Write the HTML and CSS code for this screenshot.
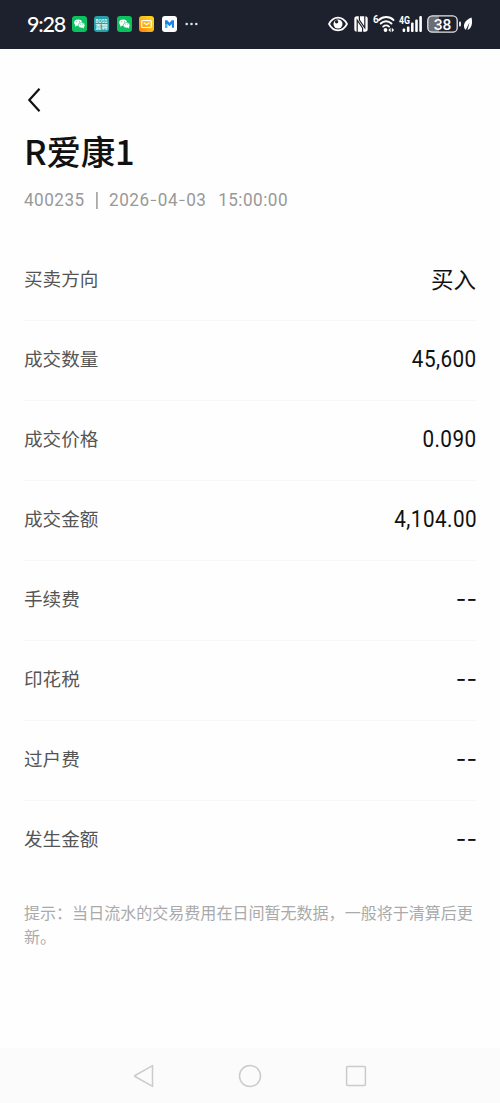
FILE: index.html
```
<!DOCTYPE html>
<html lang="zh-CN">
<head>
    <meta charset="UTF-8">
    <meta name="viewport" content="width=device-width, initial-scale=1.0">
    <title>成交详情</title>
    <link rel="stylesheet" href="styles.css">
</head>
<body>
<svg width="0" height="0" class="defs">
    <symbol id="wechat" viewBox="0 0 15 16">
        <rect width="15" height="16" rx="3" fill="#0bc160"/>
        <ellipse cx="6.1" cy="6.6" rx="3.9" ry="3.2" fill="#fff"/>
        <path d="M3.4 8.5l-.3 2.2 2.2-1.2z" fill="#fff"/>
        <ellipse cx="9.6" cy="9.3" rx="3.3" ry="2.7" fill="#fff" stroke="#0bc160" stroke-width=".6"/>
        <path d="M10.2 11.4l1.8 1 -.2-1.9z" fill="#fff"/>
        <g fill="#0bc160">
            <circle cx="4.8" cy="5.7" r=".5"/>
            <circle cx="7.4" cy="5.7" r=".5"/>
            <circle cx="8.6" cy="8.7" r=".4"/>
            <circle cx="10.7" cy="8.7" r=".4"/>
        </g>
    </symbol>
</svg>

<div class="status-bar">
    <div class="status-left">
        <span class="time">9:28</span>
        <div class="apps">
            <svg class="app"><use href="#wechat"/></svg>
            <svg class="app" viewBox="0 0 15 16">
                <rect width="15" height="16" rx="3" fill="#2a9fa5"/>
                <text x="7.5" y="6.6" class="boss-en" textLength="12" lengthAdjust="spacingAndGlyphs">BOSS</text>
                <text x="7.5" y="13.4" class="boss-cn">直聘</text>
            </svg>
            <svg class="app"><use href="#wechat"/></svg>
            <svg class="app" viewBox="0 0 15 16">
                <defs>
                    <linearGradient id="mail" x1="0" y1="1" x2="1" y2="0">
                        <stop offset="0" stop-color="#ff7d12"/>
                        <stop offset=".5" stop-color="#fdb81c"/>
                        <stop offset="1" stop-color="#fbdc1c"/>
                    </linearGradient>
                </defs>
                <rect width="15" height="16" rx="3" fill="url(#mail)"/>
                <rect x="2.7" y="4.5" width="9.6" height="7" rx="1" fill="none" stroke="#fff" stroke-width="1.2"/>
                <path d="M4.7 6.7l2.8 1.9 2.8-1.9" fill="none" stroke="#fff" stroke-width="1.1"/>
            </svg>
            <svg class="app" viewBox="0 0 15 16">
                <rect width="15" height="16" rx="3" fill="#fff"/>
                <path d="M3 4.2h2.3l2.2 2.5 2.2-2.5H12v7.6H9.8V8L7.5 10.3 5.2 8v3.8H3z" fill="#2182e8"/>
                <path d="M5.2 8v3.8H3V8z" fill="#37b9f5"/>
            </svg>
        </div>
        <svg class="dots" viewBox="0 0 13 4" fill="#dfe0e4">
            <circle cx="1.7" cy="2" r="1.3"/>
            <circle cx="6.5" cy="2" r="1.3"/>
            <circle cx="11.3" cy="2" r="1.3"/>
        </svg>
    </div>

    <div class="status-right">
        <svg class="eye" viewBox="0 0 20 16">
            <path d="M1 8C5.5-.4 14.5-.4 19 8 14.5 16.4 5.5 16.4 1 8z" fill="none" stroke="#fff" stroke-width="1.7"/>
            <circle cx="10" cy="8" r="4.5" fill="#fff"/>
            <circle cx="8.6" cy="5.8" r="1.7" fill="#1d212d"/>
        </svg>
        <svg class="nfc" viewBox="0 0 14 16">
            <rect x=".3" y=".3" width="13.4" height="15.4" rx="2.6" fill="#fff"/>
            <g fill="none" stroke="#1d212d" stroke-width="1.2">
                <path d="M3.2 16V4.2L8.6 12V16"/>
                <path d="M5.4 0V4L10.8 11.8V0"/>
            </g>
        </svg>
        <svg class="wifi" viewBox="0 0 22 18">
            <text x="0" y="7.5" class="tiny">6</text>
            <g fill="none" stroke="#fff" stroke-width="1.9" stroke-linecap="round">
                <path d="M6 5C10 1 16.5 1 20.5 5"/>
                <path d="M7.7 8.5C10.7 5.5 15.3 5.5 18.5 8.5"/>
                <path d="M10.2 11.6C11.8 10 14.3 10 16 11.6"/>
            </g>
            <circle cx="12.5" cy="15" r="1.9" fill="#fff"/>
            <path d="M17.6 12.7v4.6l-2.3-2.3zM18.8 12.7v4.6l2.3-2.3z" fill="#fff"/>
        </svg>
        <svg class="signal" viewBox="0 0 24 18">
            <text x="0" y="8.5" class="tiny" textLength="11" lengthAdjust="spacingAndGlyphs">4G</text>
            <g fill="#fff">
                <rect x="3.6" y="13.5" width="2.6" height="3.5" rx="1"/>
                <rect x="7.9" y="11.5" width="2.6" height="5.5" rx="1"/>
                <rect x="12" y="7.5" width="2.6" height="9.5" rx="1"/>
                <rect x="16.2" y="4.5" width="2.6" height="12.5" rx="1"/>
                <rect x="20.3" y="1" width="2.6" height="16" rx="1"/>
            </g>
        </svg>
        <svg class="battery" viewBox="0 0 35 18">
            <path d="M5 1h7v16H5a4 4 0 0 1-4-4V5a4 4 0 0 1 4-4z" fill="#6c6e76"/>
            <rect x=".8" y=".8" width="29.4" height="16.4" rx="4.5" fill="none" stroke="#e4e5e8" stroke-width="1.3"/>
            <rect x="32" y="6.5" width="2" height="5" rx="1" fill="#e4e5e8"/>
            <text x="15.500" y="14.600" class="percent">38</text>
        </svg>
        <svg class="leaf" viewBox="0 0 10 14">
            <path d="M8.5.5C3.5 2.5.8 5.5 1 9.5c.1 1.500.8 2.700 1.800 3.200L6.500 5.500 4.500 13C8.800 11.500 9.800 6 8.500.5z" fill="#fff"/>
        </svg>
    </div>
</div>

<div class="container">
    <a href="#" class="back-btn">
        <svg viewBox="0 0 14 26" width="14" height="26">
            <path d="M12.5 1.8L2.3 13 12.5 24.2" fill="none" stroke="#111" stroke-width="2.2"/>
        </svg>
    </a>
    <h1 class="stock-name">R爱康1</h1>
    <div class="meta">
        <span class="code">400235</span>
        <span class="divider"></span>
        <span class="date">2026<i>-</i>04<i>-</i>03</span>
        <span class="clock">15:00:00</span>
    </div>

    <div class="detail">
        <div class="row">
            <span class="label">买卖方向</span>
            <span class="side">买入</span>
        </div>
        <div class="row">
            <span class="label">成交数量</span>
            <span class="value">45,600</span>
        </div>
        <div class="row">
            <span class="label">成交价格</span>
            <span class="value">0.090</span>
        </div>
        <div class="row">
            <span class="label">成交金额</span>
            <span class="value">4,104.00</span>
        </div>
        <div class="row">
            <span class="label">手续费</span>
            <span class="empty">--</span>
        </div>
        <div class="row">
            <span class="label">印花税</span>
            <span class="empty">--</span>
        </div>
        <div class="row">
            <span class="label">过户费</span>
            <span class="empty">--</span>
        </div>
        <div class="row">
            <span class="label">发生金额</span>
            <span class="empty">--</span>
        </div>
    </div>

    <p class="hint">提示：当日流水的交易费用在日间暂无数据，一般将于清算后更新。</p>
</div>

<div class="nav-bar">
    <svg viewBox="0 0 24 24"><path d="M3 11.5L20.5 1.7V22.3L3 12.5q-.8-.5 0-1z"/></svg>
    <svg viewBox="0 0 24 24"><circle cx="12" cy="12" r="10.5"/></svg>
    <svg viewBox="0 0 24 24"><rect x="2.6" y="2.6" width="18.8" height="18.8" rx="1"/></svg>
</div>
</body>
</html>
```

FILE: styles.css
```
body {
    font-family: 'Roboto', 'Noto Sans CJK SC', sans-serif;
    margin: 0;
    height: 1103px;
    background-color: #fefefe;
    color: #111;
    display: flex;
    flex-direction: column;
}

svg {
    display: block;
    flex-shrink: 0;
    overflow: visible;
}

.defs {
    position: absolute;
}

/* status bar */
.status-bar {
    box-sizing: border-box;
    height: 49px;
    padding: 0 27px 1px;
    background-color: #1d212d;
    color: #fff;
    display: flex;
    align-items: center;
    justify-content: space-between;
}

.status-left, .status-right, .apps {
    display: flex;
    align-items: center;
}

.time {
    width: 44.5px;
    font-family: 'Lato', sans-serif;
    font-size: 21.5px;
    line-height: 48px;
    letter-spacing: -1.2px;
    font-weight: 500;
}

.apps {
    gap: 7.5px;
}

.app {
    width: 15px;
    height: 16px;
}

.boss-en, .boss-cn {
    fill: #d8f3f2;
    text-anchor: middle;
    font-weight: 700;
}

.boss-en {
    font-size: 5.5px;
}

.boss-cn {
    font-size: 6.2px;
}

.dots {
    width: 13px;
    height: 4px;
    margin-left: 8px;
}

.eye {
    width: 20px;
    height: 16px;
}

.nfc {
    width: 14px;
    height: 16px;
    margin-left: 6px;
}

.wifi {
    width: 22px;
    height: 18px;
    margin-left: 5px;
}

.signal {
    width: 24px;
    height: 18px;
    margin-left: 4px;
}

.tiny {
    fill: #fff;
    font-size: 10px;
    font-weight: 700;
}

.battery {
    width: 35px;
    height: 18px;
    margin-left: 4px;
}

.percent {
    fill: #fff;
    font-size: 15.5px;
    font-weight: 500;
    text-anchor: middle;
}

.leaf {
    width: 10px;
    height: 14px;
    margin-left: 1px;
}

/* content */
.container {
    flex: 1;
    padding: 38px 24px 0;
}

.back-btn {
    display: block;
    width: 14px;
    padding-left: 3px;
}

.stock-name {
    margin: 12px 0 0;
    font-family: 'Noto Sans CJK SC', sans-serif;
    font-size: 34.5px;
    font-weight: 500;
    line-height: 50px;
    letter-spacing: -0.2px;
}

.meta {
    display: flex;
    align-items: center;
    height: 28px;
    margin-top: 11px;
    font-size: 19px;
    line-height: 28px;
    letter-spacing: 0.55px;
    color: #999;
    transform: scaleX(0.9);
    transform-origin: left;
}

.meta i {
    font-family: 'Inter', sans-serif;
    font-style: normal;
    font-weight: 300;
}

.divider {
    width: 1.2px;
    height: 17px;
    margin: 0 13px;
    background-color: #aaa;
}

.clock {
    margin-left: 13px;
}

.detail {
    margin-top: 27px;
}

.row {
    box-sizing: border-box;
    height: 80px;
    padding-bottom: 3px;
    border-bottom: 1px solid #f7f7f7;
    display: flex;
    align-items: center;
    justify-content: space-between;
}

.row:last-child {
    border-bottom-color: transparent;
}

.label {
    padding-bottom: 3px;
    font-size: 18.6px;
    color: #555;
}

.value {
    margin-right: -1px;
    font-size: 23.5px;
    letter-spacing: 0.5px;
    transform: scaleX(0.88);
    transform-origin: right;
}

.side {
    padding-bottom: 2px;
    font-size: 22.5px;
}

.empty {
    margin-right: -1px;
    font-family: 'Inter', sans-serif;
    font-size: 23px;
}

.hint {
    margin: 21px 0 0;
    font-size: 16.05px;
    line-height: 23.5px;
    color: #aaa;
}

/* system navigation */
.nav-bar {
    box-sizing: border-box;
    height: 55px;
    background-color: #fbfbfb;
    display: flex;
    align-items: center;
    justify-content: center;
    gap: 82px;
}

.nav-bar svg {
    width: 24px;
    height: 24px;
    fill: none;
    stroke: #cbcbcb;
    stroke-width: 1.5;
}
```
